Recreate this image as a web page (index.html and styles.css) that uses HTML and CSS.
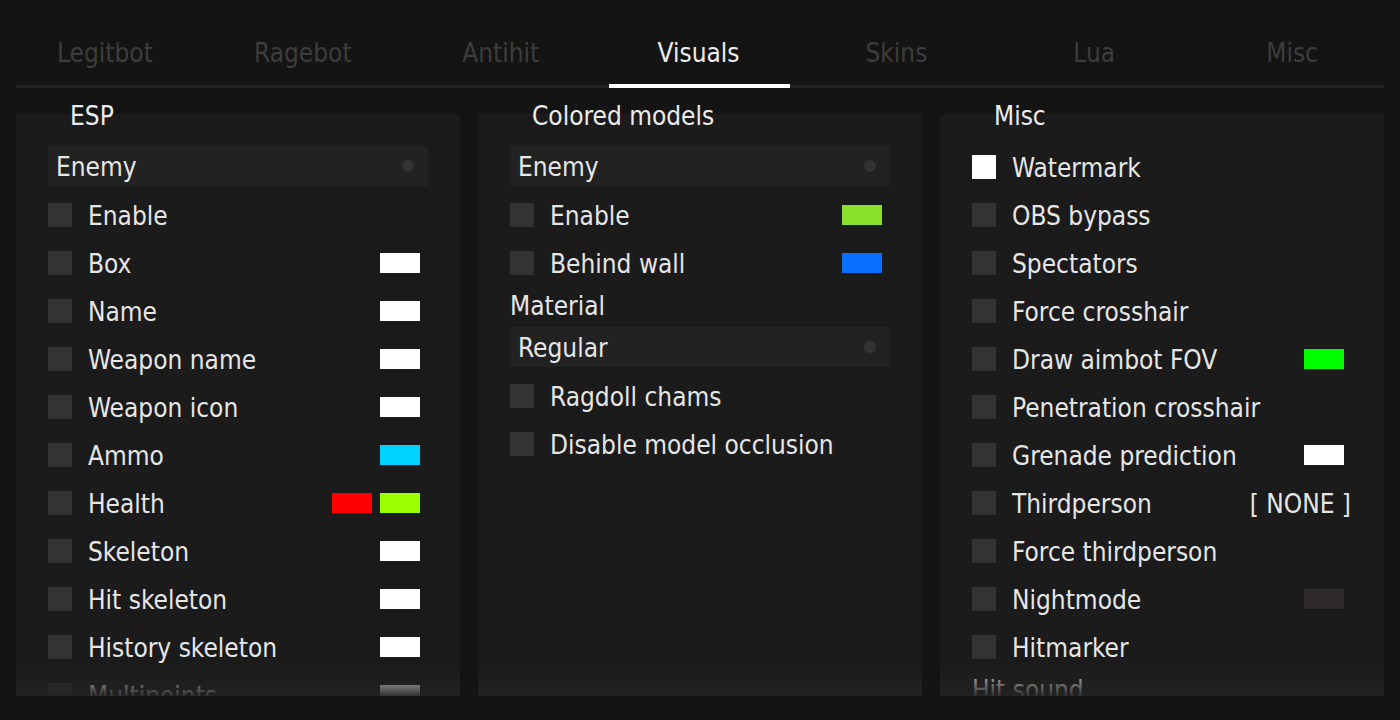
FILE: index.html
```html
<!DOCTYPE html>
<html>
<head>
<meta charset="utf-8">
<link rel="stylesheet" href="styles.css">
</head>
<body>
<nav class="tabs">
  <div class="tab">Legitbot</div>
  <div class="tab">Ragebot</div>
  <div class="tab">Antihit</div>
  <div class="tab active">Visuals</div>
  <div class="tab">Skins</div>
  <div class="tab">Lua</div>
  <div class="tab">Misc</div>
</nav>
<div class="tab-line"></div>
<main class="columns">
  <section class="column">
    <div class="panel-title">ESP</div>
    <div class="panel">
      <div class="dropdown"><span>Enemy</span><i class="dot"></i></div>
      <div class="row"><i class="check"></i><span class="label">Enable</span></div>
      <div class="row"><i class="check"></i><span class="label">Box</span><i class="swatch white"></i></div>
      <div class="row"><i class="check"></i><span class="label">Name</span><i class="swatch white"></i></div>
      <div class="row"><i class="check"></i><span class="label">Weapon name</span><i class="swatch white"></i></div>
      <div class="row"><i class="check"></i><span class="label">Weapon icon</span><i class="swatch white"></i></div>
      <div class="row"><i class="check"></i><span class="label">Ammo</span><i class="swatch cyan"></i></div>
      <div class="row"><i class="check"></i><span class="label">Health</span><i class="swatch red"></i><i class="swatch lime"></i></div>
      <div class="row"><i class="check"></i><span class="label">Skeleton</span><i class="swatch white"></i></div>
      <div class="row"><i class="check"></i><span class="label">Hit skeleton</span><i class="swatch white"></i></div>
      <div class="row"><i class="check"></i><span class="label">History skeleton</span><i class="swatch white"></i></div>
      <div class="row"><i class="check"></i><span class="label">Multipoints</span><i class="swatch white"></i></div>
    </div>
  </section>
  <section class="column">
    <div class="panel-title">Colored models</div>
    <div class="panel">
      <div class="dropdown"><span>Enemy</span><i class="dot"></i></div>
      <div class="row"><i class="check"></i><span class="label">Enable</span><i class="swatch green"></i></div>
      <div class="row"><i class="check"></i><span class="label">Behind wall</span><i class="swatch blue"></i></div>
      <div class="field-label">Material</div>
      <div class="dropdown"><span>Regular</span><i class="dot"></i></div>
      <div class="row"><i class="check"></i><span class="label">Ragdoll chams</span></div>
      <div class="row"><i class="check"></i><span class="label">Disable model occlusion</span></div>
    </div>
  </section>
  <section class="column">
    <div class="panel-title">Misc</div>
    <div class="panel">
      <div class="row"><i class="check on"></i><span class="label">Watermark</span></div>
      <div class="row"><i class="check"></i><span class="label">OBS bypass</span></div>
      <div class="row"><i class="check"></i><span class="label">Spectators</span></div>
      <div class="row"><i class="check"></i><span class="label">Force crosshair</span></div>
      <div class="row"><i class="check"></i><span class="label">Draw aimbot FOV</span><i class="swatch fov"></i></div>
      <div class="row"><i class="check"></i><span class="label">Penetration crosshair</span></div>
      <div class="row"><i class="check"></i><span class="label">Grenade prediction</span><i class="swatch white"></i></div>
      <div class="row"><i class="check"></i><span class="label">Thirdperson</span><span class="bind">[ NONE ]</span></div>
      <div class="row"><i class="check"></i><span class="label">Force thirdperson</span></div>
      <div class="row"><i class="check"></i><span class="label">Nightmode</span><i class="swatch night"></i></div>
      <div class="row"><i class="check"></i><span class="label">Hitmarker</span></div>
      <div class="field-label">Hit sound</div>
    </div>
  </section>
</main>
</body>
</html>
```
FILE: styles.css
```css
html, body {
  margin: 0;
  padding: 0;
}
body {
  width: 1400px;
  height: 720px;
  overflow: hidden;
  background: #141414;
  color: #e6e6e6;
  font-family: "DejaVu Sans Condensed", "DejaVu Sans", sans-serif;
  font-stretch: condensed;
  font-size: 26px;
}
.tabs {
  display: flex;
  height: 64px;
  margin: 20px 9px 0 6px;
}
.tab {
  flex: 1;
  position: relative;
  box-sizing: border-box;
  padding-top: 2px;
  text-align: center;
  line-height: 62px;
  color: #3d3d3d;
}
.tab.active {
  color: #ececec;
}
.tab.active::after {
  content: "";
  position: absolute;
  left: 9px;
  right: 7px;
  top: 100%;
  height: 4px;
  background: #ffffff;
}
.tab-line {
  height: 3px;
  margin: 1px 16px 0;
  background: #232323;
}
.columns {
  display: grid;
  grid-template-columns: repeat(3, 444px);
  column-gap: 18px;
  margin: 15px 16px 0;
}
.column {
  display: flex;
  flex-direction: column;
}
.panel-title {
  position: relative;
  z-index: 1;
  height: 24px;
  line-height: 24px;
  padding-top: 1px;
  margin-left: 54px;
  color: #ececec;
}
.panel {
  position: relative;
  box-sizing: border-box;
  height: 582px;
  margin-top: -14px;
  padding: 29px 32px 0;
  background: #1b1b1b;
  overflow: hidden;
}
.panel::after {
  content: "";
  position: absolute;
  left: 0;
  right: 0;
  bottom: 0;
  height: 32px;
  background: linear-gradient(to bottom, rgba(34, 34, 34, 0) 0%, rgba(34, 34, 34, 0.92) 100%);
}
.dropdown {
  display: flex;
  align-items: center;
  height: 40px;
  margin: 3px 0 5px;
  padding: 0 14px 0 8px;
  background: #222222;
}
.dropdown span {
  flex: 1;
  padding-top: 2px;
}
.dot {
  width: 12px;
  height: 12px;
  border-radius: 50%;
  background: #333333;
}
.row {
  display: flex;
  align-items: center;
  height: 48px;
  padding-right: 8px;
}
.check {
  flex: none;
  width: 24px;
  height: 24px;
  margin-right: 16px;
  background: #333333;
}
.check.on {
  background: #ffffff;
}
.label {
  flex: 1;
  padding-top: 2px;
  white-space: nowrap;
}
.swatch {
  flex: none;
  width: 40px;
  height: 20px;
  margin-left: 8px;
}
.swatch.white { background: #ffffff; }
.swatch.cyan { background: #00d2ff; }
.swatch.red { background: #ff0000; }
.swatch.lime { background: #9bff00; }
.swatch.green { background: #8ae02a; }
.swatch.blue { background: #0a6eff; }
.swatch.fov { background: #00ff00; }
.swatch.night { background: #2e2a2b; }
.bind {
  margin-right: -7px;
  padding-top: 2px;
  white-space: nowrap;
}
.field-label {
  height: 36px;
  line-height: 36px;
  padding-top: 1px;
}
```
